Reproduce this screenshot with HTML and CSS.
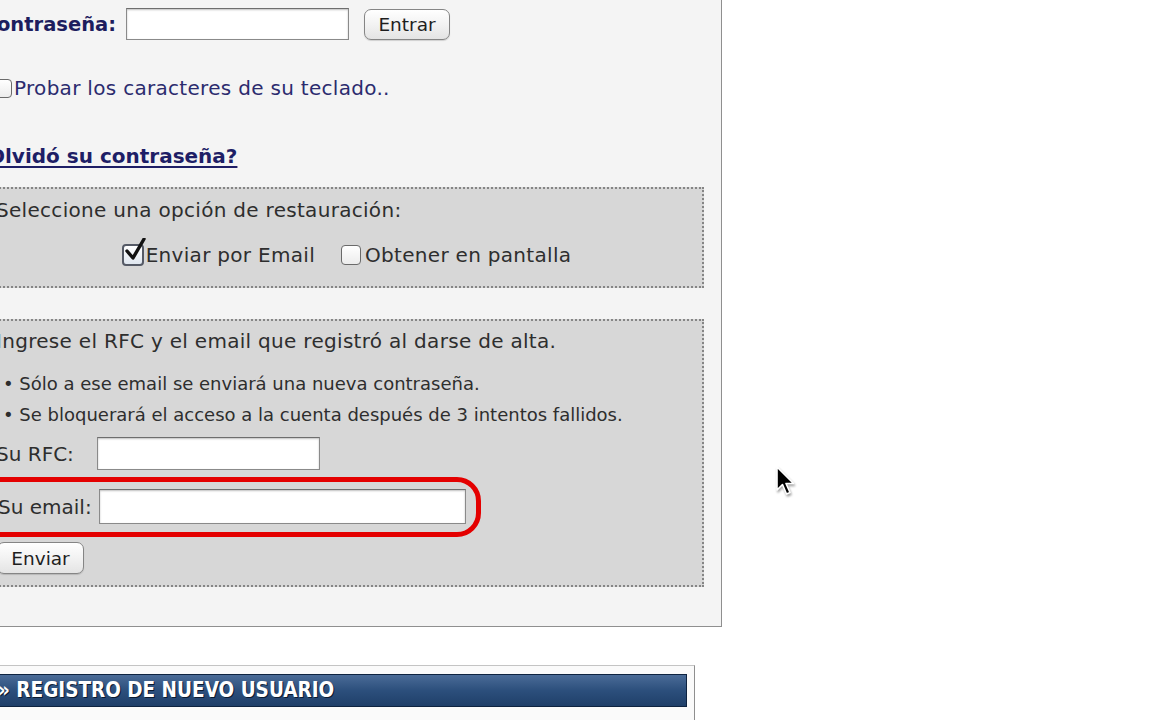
FILE: index.html
```html
<!DOCTYPE html>
<html lang="es">
<head>
<meta charset="utf-8">
<title>Acceso</title>
<link rel="stylesheet" href="styles.css">
</head>
<body>
<div class="panel">
  <div class="login-row">
    <label class="lbl-strong" for="pwd"><span>contraseña:</span></label>
    <input class="field field-pwd" id="pwd" type="password">
    <button class="btn btn-entrar" type="button">Entrar</button>
  </div>
  <div class="probar-row">
    <span class="chk"></span>
    <span class="probar-text">Probar los caracteres de su teclado..</span>
  </div>
  <div class="olvido-row">
    <a class="olvido" href="#">Olvidó su contraseña?</a>
  </div>

  <div class="box box-opciones">
    <div class="box-title">Seleccione una opción de restauración:</div>
    <div class="opciones">
      <span class="opt">
        <span class="chk chk-on">
          <svg class="tick" viewBox="0 0 24 26" width="24" height="26"><path d="M4 13 L10 20 L21 1" fill="none" stroke="#111" stroke-width="3.4" stroke-linecap="round" stroke-linejoin="round"/></svg>
        </span>
        <span>Enviar por Email</span>
      </span>
      <span class="opt">
        <span class="chk chk-sm"></span>
        <span>Obtener en pantalla</span>
      </span>
    </div>
  </div>

  <div class="box box-datos">
    <div class="box-title">Ingrese el RFC y el email que registró al darse de alta.</div>
    <ul class="notas">
      <li>• Sólo a ese email se enviará una nueva contraseña.</li>
      <li>• Se bloquerará el acceso a la cuenta después de 3 intentos fallidos.</li>
    </ul>
    <div class="form-row row-rfc">
      <label class="lbl" for="rfc">Su RFC:</label>
      <input class="field field-rfc" id="rfc" type="text">
    </div>
    <div class="ring">
      <div class="form-row row-email">
        <label class="lbl" for="email">Su email:</label>
        <input class="field field-email" id="email" type="text">
      </div>
    </div>
    <button class="btn btn-enviar" type="button">Enviar</button>
  </div>
</div>

<div class="registro">
  <div class="registro-bar">» REGISTRO DE NUEVO USUARIO</div>
</div>

<svg class="cursor" viewBox="0 0 20 32" width="20" height="32">
  <path d="M2 2 L2 25 L7.5 19.5 L11.5 29 L15 27.5 L11 18.5 L18.5 18.5 Z" fill="#000" stroke="#fff" stroke-width="1.6" stroke-linejoin="round"/>
</svg>
</body>
</html>
```
FILE: styles.css
```css
* { box-sizing: border-box; }

html, body {
  margin: 0;
  padding: 0;
  background: #ffffff;
  overflow: hidden;
}

body {
  width: 1160px;
  height: 720px;
  font-family: "DejaVu Sans", Verdana, sans-serif;
  position: relative;
}

.panel {
  margin-left: -40px;
  width: 762px;
  background: #f4f4f4;
  border-right: 1px solid #8f8f8f;
  border-bottom: 1px solid #8f8f8f;
  padding: 8px 0 39px 28px;
}

.login-row {
  display: flex;
  align-items: center;
  height: 32px;
}

.lbl-strong {
  display: flex;
  justify-content: flex-end;
  font-weight: bold;
  font-size: 19.5px;
  color: #1d1d5e;
  width: 138px;
  padding-right: 10px;
  white-space: nowrap;
  flex: none;
}

.lbl-strong span { flex: none; }

.field {
  display: block;
  height: 32px;
  border: 1px solid #8a8a8a;
  border-top-color: #6e6e6e;
  background: #fff;
  box-shadow: inset 0 1px 2px rgba(0,0,0,0.25);
  padding: 0 4px;
  font: inherit;
  flex: none;
}

.field-pwd { width: 223px; }

.btn {
  font-family: "DejaVu Sans", sans-serif;
  font-size: 18.5px;
  color: #1e1e1e;
  border: 1.5px solid #858585;
  border-radius: 7px;
  background: linear-gradient(#ffffff, #f1f1f1 55%, #e4e4e4);
  box-shadow: 0 1px 1px rgba(0,0,0,0.15);
  padding: 0;
}

.btn-entrar {
  margin-left: 15px;
  width: 86px;
  height: 31px;
}

.probar-row {
  display: flex;
  align-items: center;
  margin-top: 37px;
  margin-left: 6px;
  height: 22px;
}

.chk {
  display: inline-block;
  position: relative;
  width: 18px;
  height: 19px;
  border: 1.5px solid #6a6a6a;
  border-radius: 4px;
  background: linear-gradient(#ffffff, #ececec);
  flex: none;
}

.probar-text {
  margin-left: 2px;
  font-size: 20px;
  letter-spacing: 0.3px;
  color: #2b2b6e;
  white-space: nowrap;
}

.olvido-row {
  margin-top: 46px;
  height: 22px;
  display: flex;
  align-items: center;
}

.olvido {
  font-weight: bold;
  font-size: 20px;
  color: #1e1e66;
  text-decoration: underline;
  text-underline-offset: 3px;
  white-space: nowrap;
}

.box {
  margin-left: -8px;
  margin-right: 17px;
  background: #d7d7d7;
  border: 2px dotted #858585;
  padding-left: 14px;
  color: #2e2e2e;
  font-family: "DejaVu Sans", sans-serif;
}

.box-opciones {
  margin-top: 20px;
  height: 101px;
  padding-top: 9px;
}

.box-title {
  font-size: 20px;
  letter-spacing: 0.3px;
  height: 24px;
  line-height: 24px;
  white-space: nowrap;
}

.opciones {
  display: flex;
  justify-content: center;
  gap: 26px;
  margin-top: 21px;
  height: 24px;
  font-size: 20px;
  letter-spacing: 0.3px;
  padding-right: 5px;
  white-space: nowrap;
}

.opt {
  display: inline-flex;
  align-items: center;
  gap: 2px;
}

.chk-on {
  width: 22px;
  height: 22px;
  border-color: #555a66;
  border-width: 2px;
  background: linear-gradient(#ffffff, #dfe6ef);
}

.chk-sm {
  width: 20px;
  height: 20px;
  margin-right: 2px;
}

.tick {
  position: absolute;
  left: -1px;
  top: -8px;
}

.box-datos {
  margin-top: 31px;
  height: 268px;
  padding-top: 8px;
}

.notas {
  list-style: none;
  margin: 20px 0 0 7px;
  padding: 0;
  font-size: 18px;
}

.notas li {
  height: 21px;
  line-height: 21px;
  margin-bottom: 10px;
  white-space: nowrap;
}

.form-row {
  display: flex;
  align-items: center;
}

.lbl {
  font-size: 20px;
  flex: none;
  white-space: nowrap;
}

.row-rfc {
  margin-top: 12px;
}

.row-rfc .lbl { width: 101px; }

.field-rfc {
  width: 223px;
  height: 33px;
}

.ring {
  margin-top: 7px;
  margin-left: -30px;
  width: 515px;
  height: 60px;
  border: 5px solid #e40000;
  border-radius: 24px;
  padding: 7px 0 0 27px;
}

.row-email .lbl { width: 101px; }

.field-email {
  width: 367px;
  height: 35px;
}

.btn-enviar {
  display: block;
  margin-top: 5px;
  margin-left: 1px;
  width: 87px;
  height: 32px;
}

.registro {
  margin-top: 38px;
  margin-left: -40px;
  width: 735px;
  height: 80px;
  background: #fafafa;
  border-top: 1px solid #c4c4c4;
  border-right: 1px solid #8f8f8f;
  padding: 8px 7px 0 0;
}

.registro-bar {
  height: 33px;
  line-height: 31px;
  padding-left: 37px;
  background: linear-gradient(#4a6b97, #2c4f7c 50%, #1f3f69);
  border: 1.5px solid #0e2340;
  color: #ffffff;
  font-family: "DejaVu Sans Condensed", "DejaVu Sans", sans-serif;
  font-weight: bold;
  font-size: 20.5px;
  text-shadow: 1px 1px 0 #0a1a30;
  white-space: nowrap;
}

.cursor {
  position: absolute;
  left: 775px;
  top: 465px;
  filter: drop-shadow(1px 2px 1px rgba(0,0,0,0.35));
}
```
